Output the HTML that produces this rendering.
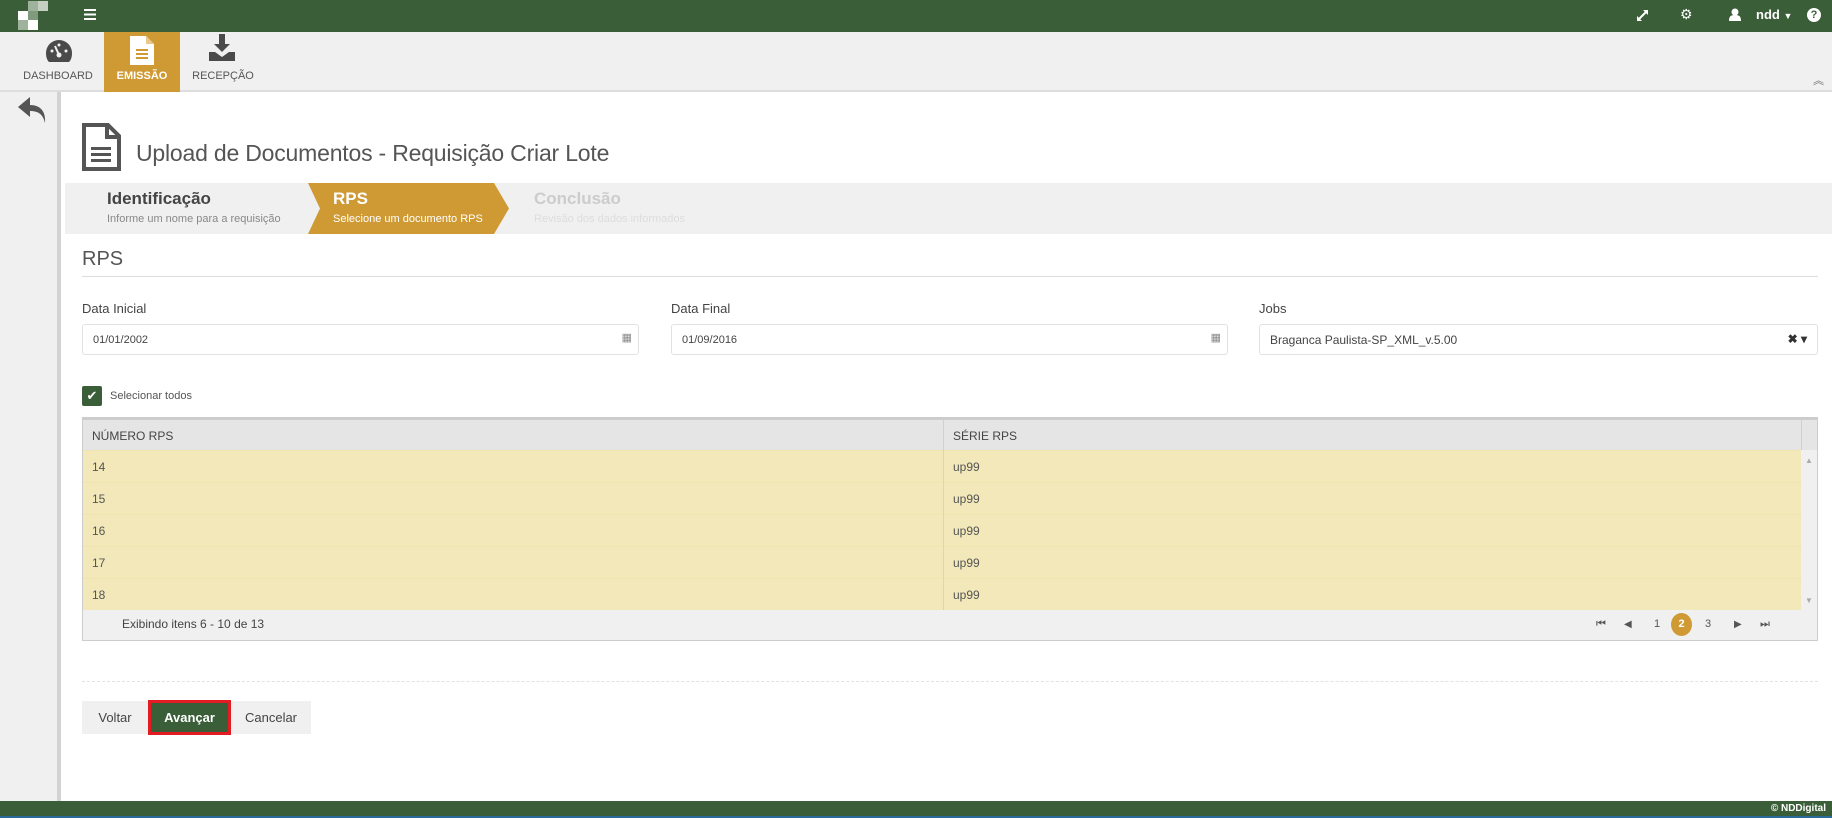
<!DOCTYPE html>
<html><head><meta charset="utf-8"><style>
*{box-sizing:border-box;margin:0;padding:0}
body{width:1832px;height:818px;position:relative;overflow:hidden;background:#fff;font-family:"Liberation Sans",sans-serif;color:#555}
.abs{position:absolute}
#top{left:0;top:0;width:1832px;height:32px;background:#3a5e38}
#nav{left:0;top:32px;width:1832px;height:60px;background:#f0f0f0;border-bottom:2px solid #ddd}
.tab{position:absolute;top:0;height:58px;text-align:center;font-size:11px;color:#555}
.tab span{position:absolute;left:0;right:0;top:38px}
#side{left:0;top:92px;width:61px;height:709px;background:#f0f0f0;border-right:4px solid #d3d3d3}
.lbl{font-size:13px;color:#444}
.inp{height:31px;border:1px solid #e2e2e2;border-radius:3px;font-size:11px;color:#444;padding:9px 10px}
.row{position:absolute;left:0;height:32px;width:1718px;background:#f2e8b9;border-top:1px solid #efe3ae;font-size:12px;color:#555}
.row span{position:absolute;top:9px}
.pg{position:absolute;top:618px;font-size:11px;color:#555}
.btn{position:absolute;top:701px;height:33px;font-size:13px;text-align:center;line-height:33px}
</style></head><body>
<div id="top" class="abs">
 <svg class="abs" style="left:18px;top:1px" width="30" height="29"><rect x="10" y="0" width="10" height="10" fill="#9fb29c"/><rect x="20" y="0" width="10" height="10" fill="#c5d0c3"/><rect x="0" y="10" width="10" height="9" fill="#fff"/><rect x="10" y="10" width="10" height="9" fill="#7f9a7c"/><rect x="0" y="19" width="10" height="10" fill="#9fb29c"/><rect x="10" y="19" width="10" height="10" fill="#fff"/></svg>
 <svg class="abs" style="left:84px;top:9px" width="12" height="11"><rect y="0" width="12" height="2" fill="#fff"/><rect y="4.5" width="12" height="2" fill="#fff"/><rect y="9" width="12" height="2" fill="#fff"/></svg>
 <svg class="abs" style="left:1636px;top:9px" width="13" height="13" stroke="#fff" stroke-width="2" fill="#fff"><line x1="2" y1="11" x2="11" y2="2"/><path d="M7 1h5v5z" stroke="none"/><path d="M1 7v5h5z" stroke="none"/></svg>
 <div class="abs" style="left:1680px;top:6px;color:#fff;font-size:14px">⚙</div>
 <svg class="abs" style="left:1729px;top:8px" width="12" height="13" fill="#fff"><circle cx="6" cy="4" r="3.5"/><path d="M0 13c0-5 2-6 6-6s6 1 6 6z"/></svg>
 <div class="abs" style="left:1756px;top:7px;color:#fff;font-size:13px;font-weight:bold">ndd <span style="font-size:9px">▼</span></div>
 <div class="abs" style="left:1807px;top:8px;width:14px;height:14px;border-radius:50%;background:#fff;color:#3a5e38;font-size:11px;font-weight:bold;text-align:center;line-height:14px">?</div>
</div>
<div id="nav" class="abs">
 <div class="tab" style="left:20px;width:76px"><svg style="position:absolute;left:25px;top:7px" width="28" height="24"><path d="M14 1a13 13 0 0 0-13 13c0 4 1 7 3 9h20c2-2 3-5 3-9A13 13 0 0 0 14 1z" fill="#4a4a4a"/><circle cx="14" cy="16" r="2.5" fill="#f0f0f0"/><line x1="14" y1="16" x2="10" y2="7" stroke="#f0f0f0" stroke-width="2"/><circle cx="7" cy="12" r="1.5" fill="#f0f0f0"/><circle cx="21" cy="12" r="1.5" fill="#f0f0f0"/><circle cx="14" cy="6" r="1.5" fill="#f0f0f0"/></svg><span>DASHBOARD</span></div>
 <div class="tab" style="left:104px;width:76px;background:#cf9a33;color:#fff;font-weight:bold;height:60px"><svg style="position:absolute;left:26px;top:4px" width="24" height="29"><path d="M0 0h16l8 8v21H0z" fill="#fff"/><path d="M16 0v8h8" fill="#e8c98b"/><rect x="6" y="13" width="12" height="2" fill="#cf9a33"/><rect x="6" y="17" width="12" height="2" fill="#cf9a33"/><rect x="6" y="21" width="12" height="2" fill="#cf9a33"/></svg><span>EMISSÃO</span></div>
 <div class="tab" style="left:190px;width:66px"><svg style="position:absolute;left:19px;top:2px" width="26" height="28"><path d="M10 0h6v10h5l-8 8-8-8h5z" fill="#4a4a4a"/><path d="M0 18h6l7 5 7-5h6v9H0z" fill="#4a4a4a"/></svg><span>RECEPÇÃO</span></div>
 <div class="abs" style="left:1813px;top:40px;font-size:11px;color:#666">︽</div>
</div>
<div id="side" class="abs">
 <svg class="abs" style="left:18px;top:5px" width="29" height="28"><path d="M12 0L0 10l12 10v-6c8 0 13 3 15 12 1-12-5-18-15-18z" fill="#555"/></svg>
</div>
<svg class="abs" style="left:82px;top:123px" width="39" height="48"><path d="M2 2h24l11 11v33H2z" fill="none" stroke="#555" stroke-width="4"/><path d="M25 2v12h12" fill="none" stroke="#555" stroke-width="4"/><rect x="9" y="24" width="20" height="3" fill="#555"/><rect x="9" y="30" width="20" height="3" fill="#555"/><rect x="9" y="36" width="20" height="3" fill="#555"/></svg>
<div class="abs" style="left:136px;top:140px;font-size:23px;color:#555;letter-spacing:-0.2px">Upload de Documentos - Requisição Criar Lote</div>
<div class="abs" style="left:65px;top:183px;width:1767px;height:51px;background:#f0f0f0"></div>
<svg class="abs" style="left:308px;top:183px" width="205" height="51"><path d="M0 0h186l15 25.5-15 25.5H0l12-25.5z" fill="#cf9a33"/></svg>
<div class="abs" style="left:107px;top:189px;font-size:17px;font-weight:bold;color:#444">Identificação</div>
<div class="abs" style="left:107px;top:213px;font-size:11px;color:#888">Informe um nome para a requisição</div>
<div class="abs" style="left:333px;top:189px;font-size:17px;font-weight:bold;color:#fff">RPS</div>
<div class="abs" style="left:333px;top:213px;font-size:11px;color:#fff">Selecione um documento RPS</div>
<div class="abs" style="left:534px;top:189px;font-size:17px;font-weight:bold;color:#ccc">Conclusão</div>
<div class="abs" style="left:534px;top:213px;font-size:11px;color:#ddd">Revisão dos dados informados</div>
<div class="abs" style="left:82px;top:248px;font-size:20px;color:#555">RPS</div>
<div class="abs" style="left:82px;top:276px;width:1736px;height:1px;background:#ddd"></div>
<div class="abs lbl" style="left:82px;top:301px">Data Inicial</div>
<div class="abs lbl" style="left:671px;top:301px">Data Final</div>
<div class="abs lbl" style="left:1259px;top:301px">Jobs</div>
<div class="abs inp" style="left:82px;top:324px;width:557px">01/01/2002<span style="position:absolute;right:6px;top:6px;color:#888">▦</span></div>
<div class="abs inp" style="left:671px;top:324px;width:557px">01/09/2016<span style="position:absolute;right:6px;top:6px;color:#888">▦</span></div>
<div class="abs inp" style="left:1259px;top:324px;width:559px;font-size:12px;padding-top:8px">Braganca Paulista-SP_XML_v.5.00<span style="position:absolute;right:10px;top:7px;color:#333;font-size:12px;font-weight:bold">✖ ▾</span></div>
<div class="abs" style="left:82px;top:386px;width:20px;height:20px;background:#3a5e38;border-radius:2px;color:#fff;font-size:13px;text-align:center;line-height:20px">✔</div>
<div class="abs" style="left:110px;top:390px;font-size:11px;color:#555">Selecionar todos</div>
<div class="abs" style="left:82px;top:417px;width:1736px;height:224px;border:1px solid #ccc;border-top:3px solid #ccc;background:#f0f0f0">
 <div class="abs" style="left:0;top:0;width:1734px;height:30px;background:#e5e5e5;font-size:12px;color:#444"><span class="abs" style="left:9px;top:9px">NÚMERO RPS</span><span class="abs" style="left:870px;top:9px">SÉRIE RPS</span><div class="abs" style="left:860px;top:0;width:1px;height:30px;background:#d0d0d0"></div><div class="abs" style="left:1718px;top:0;width:1px;height:30px;background:#d0d0d0"></div></div>
 <div class="row" style="top:30px"><span style="left:9px">14</span><span style="left:870px">up99</span></div>
 <div class="row" style="top:62px"><span style="left:9px">15</span><span style="left:870px">up99</span></div>
 <div class="row" style="top:94px"><span style="left:9px">16</span><span style="left:870px">up99</span></div>
 <div class="row" style="top:126px"><span style="left:9px">17</span><span style="left:870px">up99</span></div>
 <div class="row" style="top:158px"><span style="left:9px">18</span><span style="left:870px">up99</span></div>
 <div class="abs" style="left:860px;top:30px;width:1px;height:160px;background:#e0d5a5"></div>
 <div class="abs" style="left:1722px;top:36px;font-size:8px;color:#aaa">▲</div>
 <div class="abs" style="left:1722px;top:176px;font-size:8px;color:#aaa">▼</div>
 <div class="abs" style="left:39px;top:197px;font-size:12px;color:#444">Exibindo itens 6 - 10 de 13</div>
</div>
<div class="pg" style="left:1596px">⏮</div>
<div class="pg" style="left:1624px;font-size:10px;top:619px">◀</div>
<div class="pg" style="left:1654px">1</div>
<div class="abs" style="left:1671px;top:613px;width:21px;height:23px;border-radius:50%;background:#cf9a33;color:#fff;font-size:11px;font-weight:bold;text-align:center;line-height:23px">2</div>
<div class="pg" style="left:1705px">3</div>
<div class="pg" style="left:1734px;font-size:10px;top:619px">▶</div>
<div class="pg" style="left:1760px">⏭</div>
<div class="abs" style="left:82px;top:681px;width:1736px;border-top:1px dashed #e2e2e2"></div>
<div class="btn" style="left:82px;width:66px;background:#f0f0f0;color:#444">Voltar</div>
<div class="btn" style="left:148px;width:83px;height:35px;top:700px;background:#3a5e38;color:#fff;font-weight:bold;border:3px solid #e31b23;line-height:29px">Avançar</div>
<div class="btn" style="left:231px;width:80px;background:#f0f0f0;color:#444">Cancelar</div>
<div class="abs" style="left:0;top:801px;width:1832px;height:17px;background:#3a5e38;border-bottom:2px solid #2a6a9a"></div>
<div class="abs" style="right:6px;top:803px;font-size:10px;color:#fff;font-weight:bold">© NDDigital</div>
</body></html>
